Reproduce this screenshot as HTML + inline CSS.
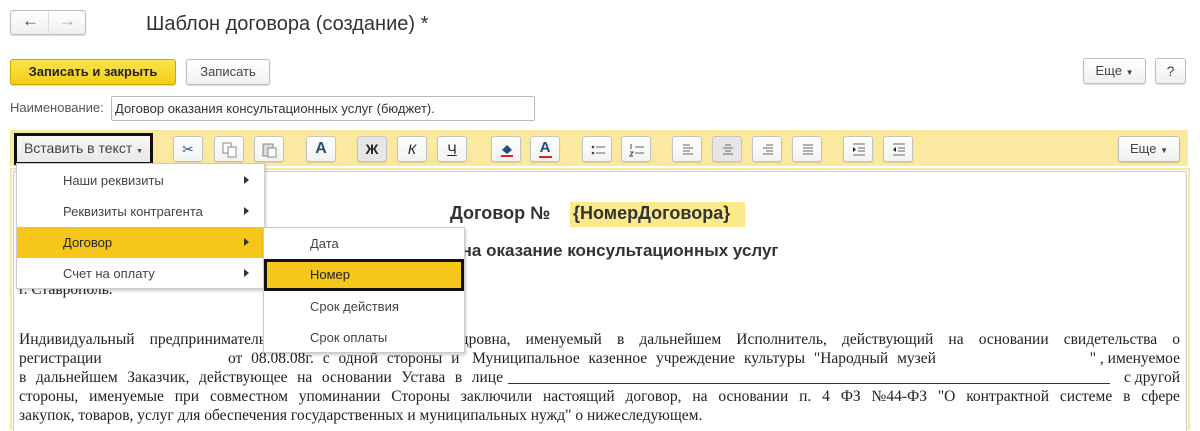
<!DOCTYPE html>
<html><head><meta charset="utf-8">
<style>
*{box-sizing:border-box;margin:0;padding:0}
body{width:1200px;height:428px;overflow:hidden;background:#fff;font-family:"Liberation Sans",Arial,sans-serif;position:relative;color:#333}
.a{position:absolute}
.btn{position:absolute;border:1px solid #bdbdbd;border-radius:3px;background:linear-gradient(#fff,#f0f0f0);box-shadow:0 1px 1px rgba(0,0,0,.15);font-size:13px;text-align:center;color:#444}
.tb{position:absolute;top:136px;width:30px;height:26px;border:1px solid #c4c4c4;border-radius:3px;background:linear-gradient(#fff,#f2f2f2);box-shadow:0 1px 1px rgba(0,0,0,.12);font-size:14px;text-align:center;line-height:24px}
.tb svg{position:absolute;left:7px;top:5px}
.mi{position:absolute;left:0;height:31px;line-height:31px;font-size:13px;color:#444;width:100%}
.arr{position:absolute;right:15px;top:11px;width:0;height:0;border-left:5px solid #333;border-top:4px solid transparent;border-bottom:4px solid transparent}
.ln{position:absolute;left:19px;width:1161px;font-family:"Liberation Serif",serif;font-size:15.5px;color:#222;white-space:nowrap;display:flex;justify-content:space-between}
.s{position:absolute;font-family:"Liberation Serif",serif;font-size:15.5px;color:#222;white-space:nowrap}
</style></head><body>
<div class="btn" style="left:10px;top:10px;width:76px;height:25px"></div>
<div class="a" style="left:48px;top:12px;width:1px;height:21px;background:#ddd"></div>
<div class="a" style="left:22px;top:11px;font-size:17px;color:#444">&#8592;</div>
<div class="a" style="left:59px;top:11px;font-size:17px;color:#aaa">&#8594;</div>
<div class="a" style="left:146px;top:13px;font-size:20px;color:#333">Шаблон договора (создание) *</div>
<div class="btn" style="left:10px;top:59px;width:166px;height:26px;background:linear-gradient(#fbe34e,#f3cf12);border-color:#c9a900;color:#222;font-weight:bold;line-height:24px">Записать и закрыть</div>
<div class="btn" style="left:186px;top:59px;width:84px;height:26px;line-height:24px">Записать</div>
<div class="btn" style="left:1083px;top:58px;width:63px;height:26px;line-height:24px">Еще <span style="font-size:8px">&#9660;</span></div>
<div class="btn" style="left:1155px;top:58px;width:31px;height:26px;line-height:24px;font-size:14px">?</div>
<div class="a" style="left:10px;top:100px;font-size:13px;color:#555">Наименование:</div>
<div class="a" style="left:111px;top:96px;width:424px;height:25px;border:1px solid #bbb;border-radius:2px;font-size:13px;line-height:23px;padding-left:3px;color:#333">Договор оказания консультационных услуг (бюджет).</div>
<div class="a" style="left:10px;top:130px;width:1178px;height:36px;background:#fbe9a0"></div>
<div class="a" style="left:14px;top:133px;width:139px;height:32px;border:3px solid #111;background:#fff"></div>
<div class="btn" style="left:17px;top:136px;width:133px;height:26px;line-height:24px;border:none;background:linear-gradient(#f7f7f7,#e8e8e8);font-size:14px">Вставить в текст <span style="font-size:7px">&#9660;</span></div>
<div class="tb" style="left:173px;color:#2a5d8a">&#9986;</div>
<div class="tb" style="left:214px"><svg width="16" height="16"><rect x="1" y="1" width="8" height="10" fill="#fff" stroke="#888"/><rect x="6" y="5" width="8" height="10" fill="#fff" stroke="#888"/></svg></div>
<div class="tb" style="left:254px"><svg width="16" height="16"><rect x="1" y="2" width="10" height="12" fill="#ddd" stroke="#888"/><rect x="6" y="6" width="8" height="9" fill="#fff" stroke="#888"/></svg></div>
<div class="tb" style="left:306px;font-weight:bold;color:#1d4e7d;font-size:16px">A</div>
<div class="tb" style="left:357px;font-weight:bold;background:#e6e6e6;color:#222">Ж</div>
<div class="tb" style="left:397px;font-style:italic;color:#222">К</div>
<div class="tb" style="left:437px;text-decoration:underline;color:#222">Ч</div>
<div class="tb" style="left:491px"><svg width="16" height="16"><path d="M3 8l5-5 5 5-5 4z" fill="#1d4e7d"/><rect x="2" y="13" width="12" height="2" fill="#d22"/></svg></div>
<div class="tb" style="left:530px;font-weight:bold;color:#1d4e7d;font-size:15px;line-height:22px">A<div style="position:absolute;left:8px;top:19px;width:13px;height:2px;background:#d22"></div></div>
<div class="tb" style="left:582px"><svg width="16" height="16"><circle cx="3" cy="5" r="1.3" fill="#444"/><circle cx="3" cy="11" r="1.3" fill="#444"/><path d="M6 5h9M6 11h9" stroke="#666"/></svg></div>
<div class="tb" style="left:621px"><svg width="16" height="16"><path d="M2 2v5M1 10h3l-3 4h3" stroke="#444" fill="none"/><path d="M6 5h9M6 11h9" stroke="#666"/></svg></div>
<div class="tb" style="left:672px"><svg width="16" height="16"><path d="M3 3h7M3 6h10M3 9h7M3 12h10" stroke="#666"/></svg></div>
<div class="tb" style="left:712px;background:#e6e6e6"><svg width="16" height="16"><path d="M5 3h6M3 6h10M5 9h6M3 12h10" stroke="#666"/></svg></div>
<div class="tb" style="left:752px"><svg width="16" height="16"><path d="M6 3h7M3 6h10M6 9h7M3 12h10" stroke="#666"/></svg></div>
<div class="tb" style="left:792px"><svg width="16" height="16"><path d="M3 3h10M3 6h10M3 9h10M3 12h10" stroke="#666"/></svg></div>
<div class="tb" style="left:843px"><svg width="16" height="16"><path d="M2 5l3 2.5-3 2.5z" fill="#222"/><path d="M2 2h12M7 6h7M7 9h7M2 13h12" stroke="#666"/></svg></div>
<div class="tb" style="left:883px"><svg width="16" height="16"><path d="M5 5l-3 2.5 3 2.5z" fill="#222"/><path d="M2 2h12M7 6h7M7 9h7M2 13h12" stroke="#666"/></svg></div>
<div class="btn" style="left:1118px;top:136px;width:62px;height:26px;line-height:24px">Еще <span style="font-size:8px">&#9660;</span></div>
<div class="a" style="left:10px;top:168px;width:1180px;height:262px;border:2px solid #f6e7a3;border-bottom:none"></div>
<div class="a" style="left:13px;top:171px;width:1174px;height:260px;border:1px solid #ccc;border-bottom:none"></div>
<div class="a" style="left:450px;top:203px;font-size:18px;font-weight:bold;color:#333">Договор №</div>
<div class="a" style="left:570px;top:202px;width:175px;height:25px;background:#fbe98b"></div>
<div class="a" style="left:573px;top:203px;font-size:18px;font-weight:bold;color:#333">{НомерДоговора}</div>
<div class="a" style="left:386px;top:241px;font-size:17px;font-weight:bold;color:#333">Договор на оказание консультационных услуг</div>
<div class="s" style="left:19px;top:281px">г. Ставрополь.</div>
<div class="ln" style="top:331px"><span>Индивидуальный</span><span>предприниматель</span><span>Иванова</span><span>Ольга</span><span>Александровна,</span><span>именуемый</span><span>в</span><span>дальнейшем</span><span>Исполнитель,</span><span>действующий</span><span>на</span><span>основании</span><span>свидетельства</span><span>о</span></div>
<div class="s" style="left:19px;top:350px">регистрации</div>
<div class="ln" style="top:350px;left:228px;width:708px"><span>от</span><span>08.08.08г.</span><span>с</span><span>одной</span><span>стороны</span><span>и</span><span>&nbsp;Муниципальное</span><span>казенное</span><span>учреждение</span><span>культуры</span><span>"Народный</span><span>музей</span></div>
<div class="s" style="left:1078px;top:350px;width:102px;text-align:right">" , именуемое</div>
<div class="ln" style="top:369px;width:484px"><span>в</span><span>дальнейшем</span><span>Заказчик,</span><span>действующее</span><span>на</span><span>основании</span><span>Устава</span><span>в</span><span>лице</span></div>
<div class="a" style="left:508px;top:383px;width:602px;height:1px;background:#333"></div>
<div class="s" style="left:1100px;top:369px;width:80px;text-align:right">с другой</div>
<div class="ln" style="top:388px"><span>стороны,</span><span>именуемые</span><span>при</span><span>совместном</span><span>упоминании</span><span>Стороны</span><span>заключили</span><span>настоящий</span><span>договор,</span><span>на</span><span>основании</span><span>п.</span><span>4</span><span>ФЗ</span><span>№44-ФЗ</span><span>"О</span><span>контрактной</span><span>системе</span><span>в</span><span>сфере</span></div>
<div class="s" style="left:19px;top:407px">закупок, товаров, услуг для обеспечения государственных и муниципальных нужд" о нижеследующем.</div>
<div class="a" style="left:16px;top:163px;width:249px;height:126px;background:#fff;border:1px solid #ccc;box-shadow:1px 2px 3px rgba(0,0,0,.2)">
 <div class="mi" style="top:1px"><span style="margin-left:46px">Наши реквизиты</span><div class="arr"></div></div>
 <div class="mi" style="top:32px"><span style="margin-left:46px">Реквизиты контрагента</span><div class="arr"></div></div>
 <div class="mi" style="top:63px;background:#f6c61a;color:#222"><span style="margin-left:46px">Договор</span><div class="arr"></div></div>
 <div class="mi" style="top:94px"><span style="margin-left:46px">Счет на оплату</span><div class="arr"></div></div>
</div>
<div class="a" style="left:263px;top:227px;width:202px;height:126px;background:#fff;border:1px solid #ccc;box-shadow:1px 2px 3px rgba(0,0,0,.2)">
 <div class="mi" style="top:0"><span style="margin-left:46px">Дата</span></div>
 <div class="mi" style="top:31px;height:32px;line-height:26px;background:#f6c61a;border:3px solid #111;color:#222"><span style="margin-left:43px">Номер</span></div>
 <div class="mi" style="top:63px"><span style="margin-left:46px">Срок действия</span></div>
 <div class="mi" style="top:94px"><span style="margin-left:46px">Срок оплаты</span></div>
</div>
</body></html>
